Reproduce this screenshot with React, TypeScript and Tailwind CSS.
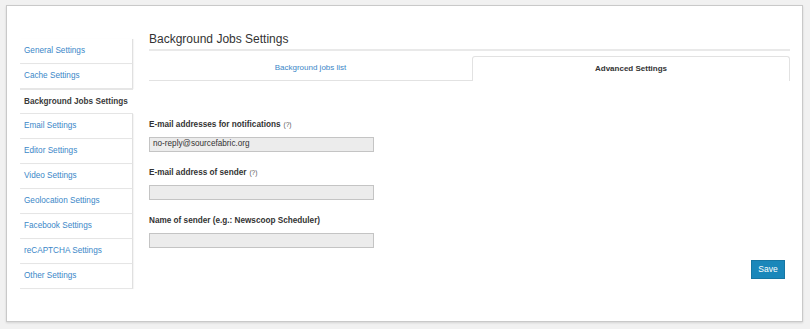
import React from "react";

const items = [
  "General Settings",
  "Cache Settings",
  "Background Jobs Settings",
  "Email Settings",
  "Editor Settings",
  "Video Settings",
  "Geolocation Settings",
  "Facebook Settings",
  "reCAPTCHA Settings",
  "Other Settings",
];

function Field({ label, hint, value }: { label: string; hint?: boolean; value?: string }) {
  return (
    <div className="flex flex-col">
      <div className="h-[12px] leading-[12px] text-[8.2px] font-bold text-[#333]">
        {label}
        {hint && <span className="ml-[3px] font-normal text-[6.5px] text-[#555]">(?)</span>}
      </div>
      <div className="mt-[6px] w-[225px] h-[15px] bg-[#ececec] border border-[#c4c4c4] flex items-center pl-[3px] text-[8.2px] text-[#333]">
        {value}
      </div>
    </div>
  );
}

export default function App() {
  return (
    <div
      className="w-[810px] h-[329px] bg-[#f1f1f1] pt-[5px] pl-[6px]"
      style={{ fontFamily: '"Liberation Sans", Arial, sans-serif' }}
    >
      <div className="w-[797px] h-[317px] bg-white border border-[#c9c9c9] shadow-[0_1px_2px_rgba(0,0,0,0.12)] flex pl-[13px] pt-[25px] pr-[12px]">
        <div className="mt-[8px] w-[113px] flex flex-col self-start">
          {items.map((it, i) => {
            const active = i === 2;
            return (
              <div
                key={it}
                className={
                  "h-[25px] flex items-center pl-[4px] pt-[1px] text-[8.2px] border-b border-[#e6e6e6] " +
                  (active
                    ? "font-bold text-[#3a3a3a] border-t border-t-[#e6e6e6]"
                    : "text-[#3b87c8] border-r border-r-[#e0e0e0] shadow-[1px_0_1px_rgba(0,0,0,0.04)]")
                }
              >
                {it}
              </div>
            );
          })}
        </div>
        <div className="ml-[16px] flex-1 flex flex-col">
          <div className="h-[15px] flex items-center text-[12px] text-[#333]">
            Background Jobs Settings
          </div>
          <div className="mt-[3px] h-[2px] bg-[#e9e9e9]" />
          <div className="mt-[5px] flex h-[25px]">
            <div className="w-[323px] border-b border-[#e2e2e2] flex items-center justify-center text-[8px] text-[#3b87c8]">
              Background jobs list
            </div>
            <div className="flex-1 border border-b-0 border-[#e2e2e2] rounded-t-[3px] flex items-center justify-center text-[8px] font-bold text-[#333]">
              Advanced Settings
            </div>
          </div>
          <div className="mt-[38px] flex flex-col gap-[16px]">
            <Field label="E-mail addresses for notifications" hint value="no-reply@sourcefabric.org" />
            <div className="-mt-[1px]">
              <Field label="E-mail address of sender" hint />
            </div>
            <div className="-mt-[1px]">
              <Field label="Name of sender (e.g.: Newscoop Scheduler)" />
            </div>
          </div>
          <div className="mt-[12px] flex justify-end pr-[5px]">
            <div className="w-[34px] h-[19px] bg-[#1a87ba] border border-[#1676a3] flex items-center justify-center text-[8.5px] text-white">
              Save
            </div>
          </div>
        </div>
      </div>
    </div>
  );
}
